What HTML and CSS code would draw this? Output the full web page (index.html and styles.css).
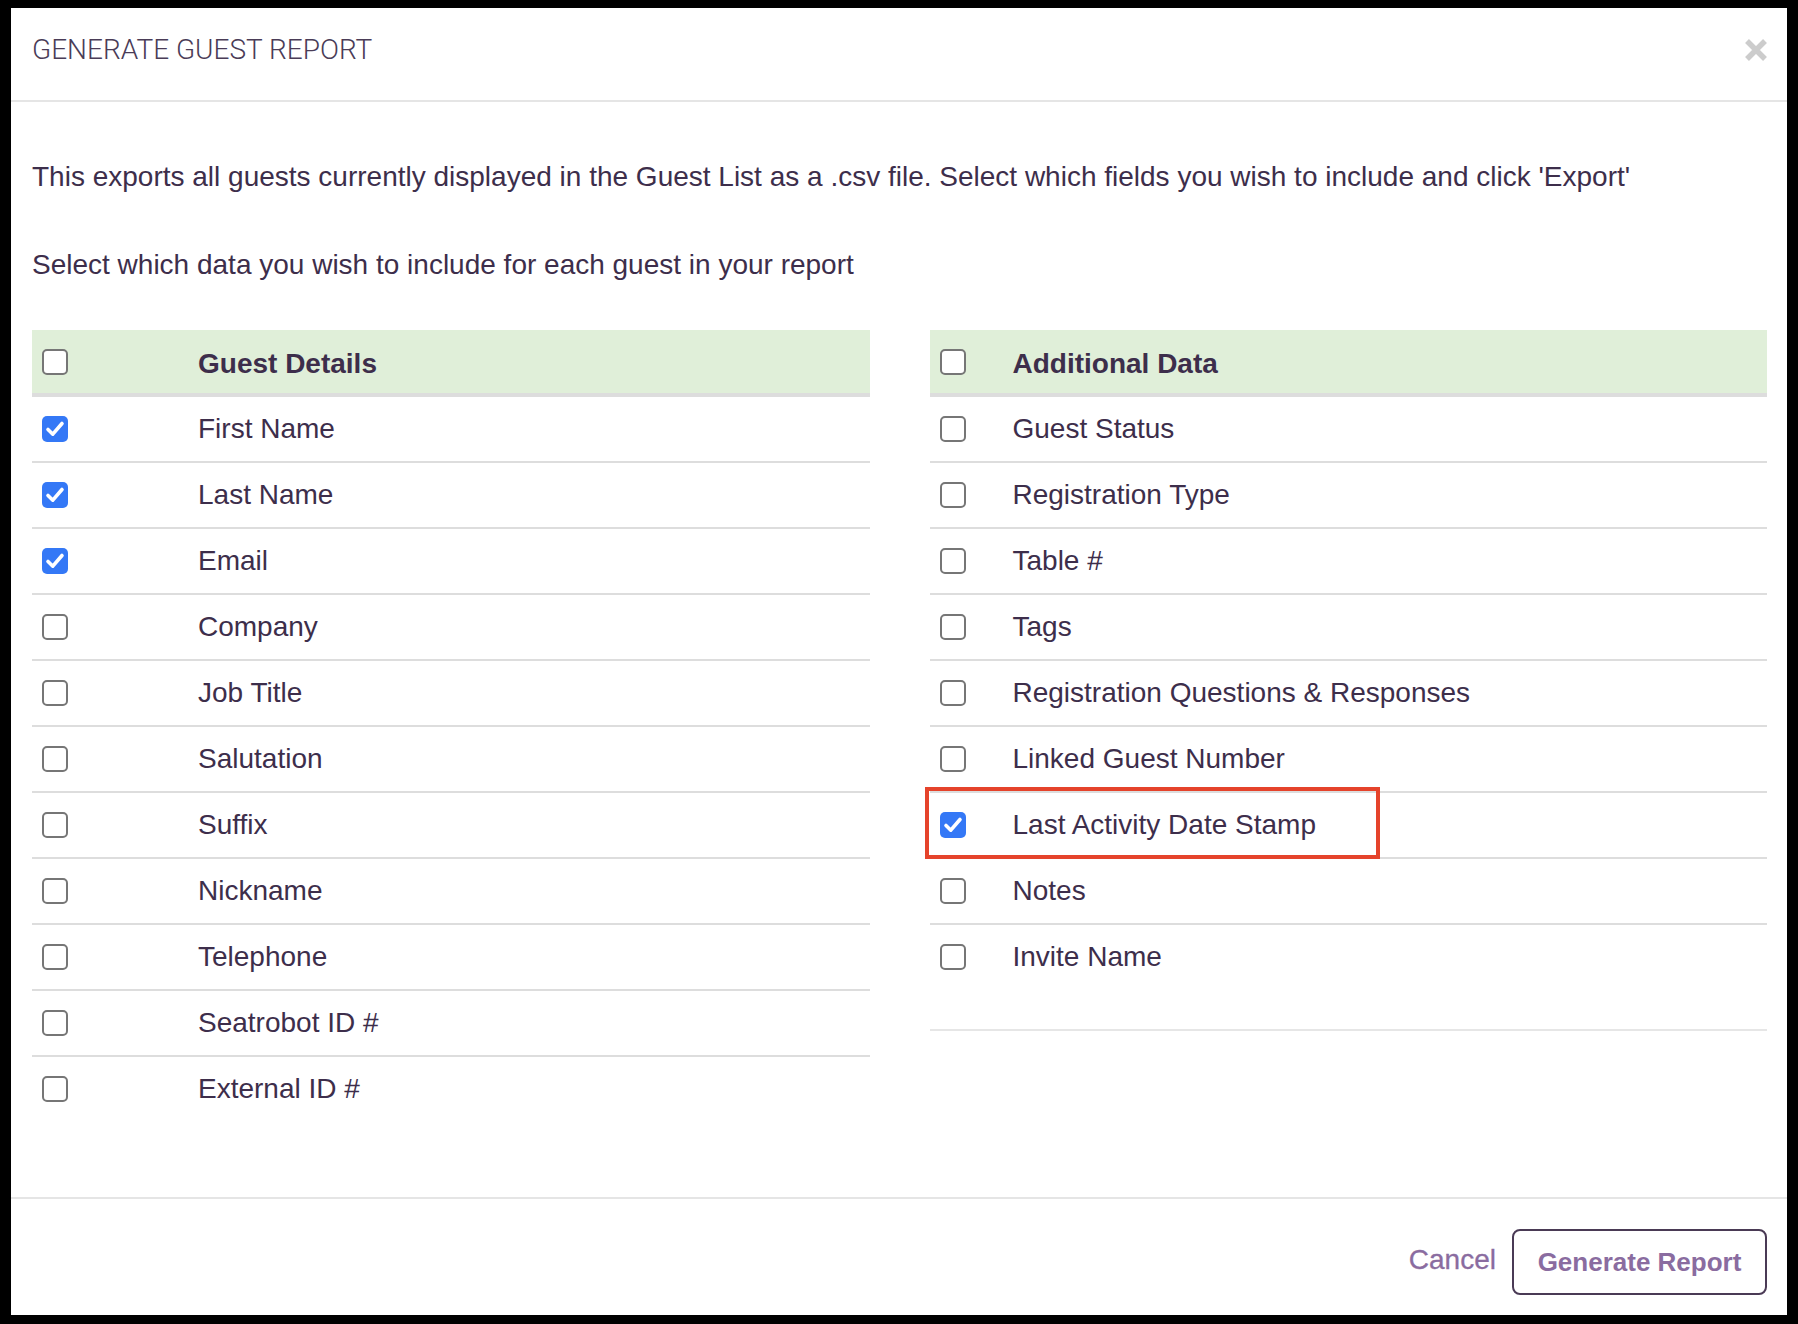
FILE: index.html
```html
<!DOCTYPE html>
<html>
<head>
<meta charset="utf-8">
<link rel="stylesheet" href="styles.css">
</head>
<body>
<div class="modal">
  <div class="modal-header">
    <h4 class="modal-title">GENERATE GUEST REPORT</h4>
    <button class="close" aria-label="Close">
      <svg width="22" height="22" viewBox="0 0 22 22"><path d="M2 2 L20 20 M20 2 L2 20" stroke="#cccccc" stroke-width="5.5" fill="none"/></svg>
    </button>
  </div>
  <div class="modal-body">
    <p class="intro">This exports all guests currently displayed in the Guest List as a .csv file. Select which fields you wish to include and click 'Export'</p>
    <p class="intro second">Select which data you wish to include for each guest in your report</p>
    <div class="tables">
      <div class="table-wrap">
        <table class="fields left">
          <thead>
            <tr><th class="cb"><span class="box"></span></th><th class="label">Guest Details</th></tr>
          </thead>
          <tbody>
            <tr><td class="cb"><span class="box checked"></span></td><td>First Name</td></tr>
            <tr><td class="cb"><span class="box checked"></span></td><td>Last Name</td></tr>
            <tr><td class="cb"><span class="box checked"></span></td><td>Email</td></tr>
            <tr><td class="cb"><span class="box"></span></td><td>Company</td></tr>
            <tr><td class="cb"><span class="box"></span></td><td>Job Title</td></tr>
            <tr><td class="cb"><span class="box"></span></td><td>Salutation</td></tr>
            <tr><td class="cb"><span class="box"></span></td><td>Suffix</td></tr>
            <tr><td class="cb"><span class="box"></span></td><td>Nickname</td></tr>
            <tr><td class="cb"><span class="box"></span></td><td>Telephone</td></tr>
            <tr><td class="cb"><span class="box"></span></td><td>Seatrobot ID #</td></tr>
            <tr class="last"><td class="cb"><span class="box"></span></td><td>External ID #</td></tr>
          </tbody>
        </table>
      </div>
      <div class="table-wrap">
        <table class="fields right">
          <thead>
            <tr><th class="cb"><span class="box"></span></th><th class="label">Additional Data</th></tr>
          </thead>
          <tbody>
            <tr><td class="cb"><span class="box"></span></td><td>Guest Status</td></tr>
            <tr><td class="cb"><span class="box"></span></td><td>Registration Type</td></tr>
            <tr><td class="cb"><span class="box"></span></td><td>Table #</td></tr>
            <tr><td class="cb"><span class="box"></span></td><td>Tags</td></tr>
            <tr><td class="cb"><span class="box"></span></td><td>Registration Questions &amp; Responses</td></tr>
            <tr><td class="cb"><span class="box"></span></td><td>Linked Guest Number</td></tr>
            <tr><td class="cb"><span class="box checked"></span></td><td>Last Activity Date Stamp</td></tr>
            <tr><td class="cb"><span class="box"></span></td><td>Notes</td></tr>
            <tr class="tall"><td class="cb"><span class="box"></span></td><td>Invite Name</td></tr>
          </tbody>
        </table>
        <div class="highlight"></div>
      </div>
    </div>
  </div>
  <div class="modal-footer">
    <a class="cancel">Cancel</a>
    <button class="btn-generate">Generate Report</button>
  </div>
</div>
</body>
</html>
```

FILE: styles.css
```css
html, body {
  margin: 0;
  padding: 0;
  background: #000;
}
body {
  font-family: "Liberation Sans", Arial, sans-serif;
  color: #3d2e4b;
}
.modal {
  margin: 8px 11px 0 11px;
  width: 1776px;
  height: 1307px;
  background: #fff;
  display: flex;
  flex-direction: column;
}
.modal-header {
  height: 83px;
  border-bottom: 2px solid #e5e5e5;
  display: flex;
  align-items: center;
  justify-content: space-between;
  padding: 0 20px 9px 21px;
  box-sizing: content-box;
}
.modal-title {
  margin: 0;
  font-family: Roboto, sans-serif;
  font-weight: 300;
  font-size: 28px;
  color: #4a3c57;
}
.close {
  background: none;
  border: 0;
  padding: 0;
  width: 22px;
  height: 22px;
  display: flex;
}
.modal-body {
  flex: 1;
  padding: 0 20px 0 21px;
}
.intro {
  margin: 55px 0 0 0;
  font-size: 28px;
  line-height: 40px;
}
.intro.second {
  margin-top: 48px;
}
.tables {
  margin-top: 45px;
  display: grid;
  grid-template-columns: 1fr 1fr;
  column-gap: 60px;
}
.table-wrap {
  position: relative;
}
.fields {
  width: 100%;
  border-collapse: collapse;
  font-size: 28px;
}
.fields th, .fields td {
  height: 64px;
  padding: 0;
  text-align: left;
  vertical-align: middle;
}
.fields thead th {
  height: 63px;
  background: #e0efd9;
  border-bottom: 4px solid #dddddd;
  font-weight: bold;
}
.fields thead th.label {
  padding-top: 5px;
  height: 58px;
}
.fields tbody td {
  border-bottom: 2px solid #dddddd;
}
.fields tbody tr.last td {
  border-bottom: 0;
}
.fields tbody tr.tall td {
  height: 64px;
  padding-bottom: 40px;
  border-bottom: 2px solid #e6e6e6;
}
.fields.left .cb {
  width: 166px;
}
.fields.right .cb {
  width: 83px;
}
.cb .box {
  display: block;
  margin-left: 10px;
  width: 26px;
  height: 26px;
  box-sizing: border-box;
  border: 2px solid #767676;
  border-radius: 5px;
  background: #fff;
}
.cb .box.checked {
  border: 0;
  background: #3478f6 url("data:image/svg+xml;utf8,<svg xmlns='http://www.w3.org/2000/svg' width='26' height='26' viewBox='0 0 26 26'><path d='M6 13.5 L10.8 18.2 L20 7.5' stroke='white' stroke-width='3.6' fill='none' stroke-linecap='round' stroke-linejoin='round'/></svg>") no-repeat center;
}
.highlight {
  position: absolute;
  left: -5px;
  top: 457px;
  width: 455px;
  height: 72px;
  box-sizing: border-box;
  border: 4px solid #e5432b;
}
.modal-footer {
  height: 118px;
  box-sizing: border-box;
  border-top: 2px solid #e5e5e5;
  padding: 30px 20px 0 0;
  display: flex;
  justify-content: flex-end;
  align-items: flex-start;
}
.cancel {
  font-family: "Liberation Sans", Arial, sans-serif;
  font-size: 28px;
  color: #8a6ca0;
  line-height: 62px;
  margin-right: 16px;
  -webkit-text-stroke: 0.3px #8a6ca0;
}
.btn-generate {
  width: 255px;
  height: 66px;
  box-sizing: border-box;
  border: 2px solid #4a3a55;
  border-radius: 8px;
  background: #fff;
  font-family: "Liberation Sans", Arial, sans-serif;
  font-weight: bold;
  font-size: 26px;
  color: #8a6ca0;
  padding: 0;
}
```
